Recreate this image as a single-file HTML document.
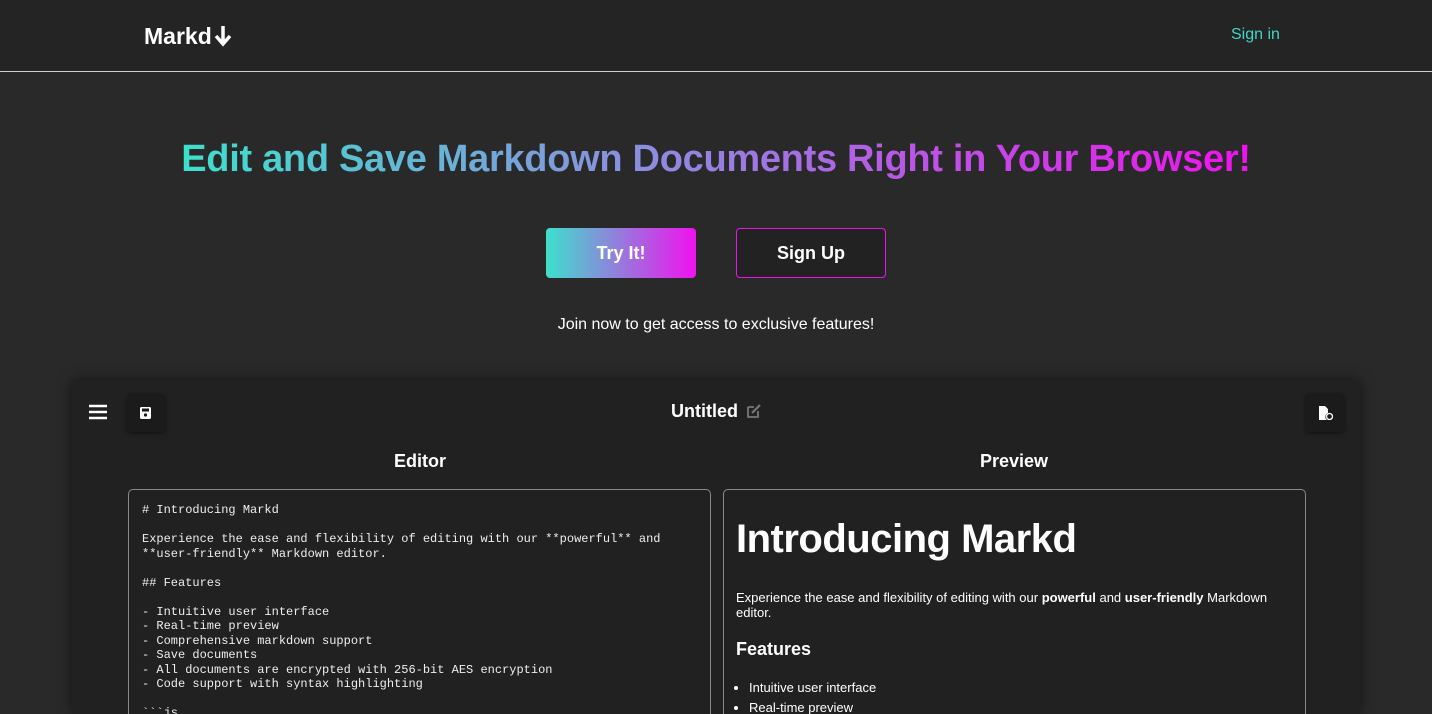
<!DOCTYPE html>
<html style="width:1432px;height:714px;overflow:hidden"><head><style>
*{box-sizing:border-box;margin:0;padding:0}
body{width:1432px;height:714px;overflow:hidden;background:#292929;font-family:"Liberation Sans",sans-serif;color:#fff;position:relative}
.hdr{height:72px;background:#242424;border-bottom:1px solid #cfcfcf;position:relative}
.logo{position:absolute;left:144px;top:23px;font-size:23px;font-weight:bold}
.signin{position:absolute;left:1231px;top:26px;font-size:16px;color:#3fd6c6}
h1{position:absolute;top:138px;left:0;width:1432px;text-align:center;font-size:38px;font-weight:bold;letter-spacing:-0.3px}
h1 span{background:linear-gradient(90deg,#3ee0cc 0%,#8f8ae0 45%,#f012ee 100%);-webkit-background-clip:text;background-clip:text;color:transparent}
.btn{position:absolute;top:228px;width:150px;height:50px;border-radius:4px;font-size:18px;font-weight:bold;text-align:center;line-height:50px}
.try{left:546px;background:linear-gradient(90deg,#3ee0cc,#f012ee)}
.up{left:736px;border:1px solid #f012ee;background:#222;line-height:48px}
.join{position:absolute;top:316px;width:1432px;text-align:center;font-size:16px}
.card{position:absolute;left:72px;top:380px;width:1288px;height:334px;background:#212121;border-radius:6px 6px 0 0;box-shadow:0 0 14px rgba(0,0,0,.5);overflow:hidden}
.ib{position:absolute;width:38px;height:38px;background:#1b1b1b;border-radius:4px;box-shadow:0 1px 4px rgba(0,0,0,.5)}
.title{position:absolute;left:599px;top:21px;font-size:18px;font-weight:bold}
.lbl{position:absolute;top:71px;font-size:18px;font-weight:bold}
.pane{position:absolute;top:109px;width:583px;height:320px;border:1px solid #8a8a8a;border-radius:5px;background:#212121;overflow:hidden}
pre{font-family:"Liberation Mono",monospace;font-size:12px;line-height:14.5px;color:#eee;padding:13px 13px;white-space:pre}
.pv{padding:0 12px}
.pv h2{font-size:40px;margin-top:27px;font-weight:bold;letter-spacing:-0.5px}
.pv p{font-size:13px;margin-top:28px;line-height:15px}
.pv h3{font-size:18px;margin-top:19px}
.pv ul{margin-top:18px;font-size:13px;padding-left:13px;line-height:20px}
</style></head><body>
<div class="hdr"><div class="logo">Markd<svg width="18" height="22" viewBox="0 0 18 22" style="vertical-align:-3px;margin-left:2px"><path d="M9 1v16M2 11l7 8 7-8" stroke="#fff" stroke-width="3.5" fill="none"/></svg></div><div class="signin">Sign in</div></div>
<h1><span>Edit and Save Markdown Documents Right in Your Browser!</span></h1>
<div class="btn try">Try It!</div><div class="btn up">Sign Up</div>
<div class="join">Join now to get access to exclusive features!</div>
<div class="card">
<svg style="position:absolute;left:17px;top:24px" width="18" height="16"><path d="M0 2h18M0 8h18M0 14h18" stroke="#fff" stroke-width="2.4"/></svg>
<div class="ib" style="left:55px;top:14px"><svg style="position:absolute;left:13px;top:13px" width="11" height="12"><rect x="0" y="0" width="11" height="12" rx="1.5" fill="#fff"/><rect x="2" y="1.5" width="7" height="3" fill="#1b1b1b"/><circle cx="5.5" cy="8" r="1.6" fill="#1b1b1b"/></svg></div>
<div class="title">Untitled <svg width="16" height="16" style="vertical-align:-2px;margin-left:3px"><path d="M2 4h6M2 4v10h10v-6" stroke="#777" stroke-width="1.8" fill="none"/><path d="M6 10l8-8" stroke="#777" stroke-width="2.2"/></svg></div>
<div class="ib" style="left:1234px;top:14px"><svg style="position:absolute;left:13px;top:12px" width="14" height="14"><path d="M0 0h6l3 3v4a4 4 0 0 0 -1 7H0z" fill="#fff"/><circle cx="10.5" cy="10.5" r="3" fill="none" stroke="#fff" stroke-width="1.3"/></svg></div>
<div class="lbl" style="left:322px">Editor</div>
<div class="lbl" style="left:908px">Preview</div>
<div class="pane" style="left:56px"><pre># Introducing Markd

Experience the ease and flexibility of editing with our **powerful** and
**user-friendly** Markdown editor.

## Features

- Intuitive user interface
- Real-time preview
- Comprehensive markdown support
- Save documents
- All documents are encrypted with 256-bit AES encryption
- Code support with syntax highlighting

&#96;&#96;&#96;js</pre></div>
<div class="pane pv" style="left:651px"><h2>Introducing Markd</h2><p>Experience the ease and flexibility of editing with our <b>powerful</b> and <b>user-friendly</b> Markdown editor.</p><h3>Features</h3><ul><li>Intuitive user interface</li><li>Real-time preview</li></ul></div>
</div>
</body></html>
